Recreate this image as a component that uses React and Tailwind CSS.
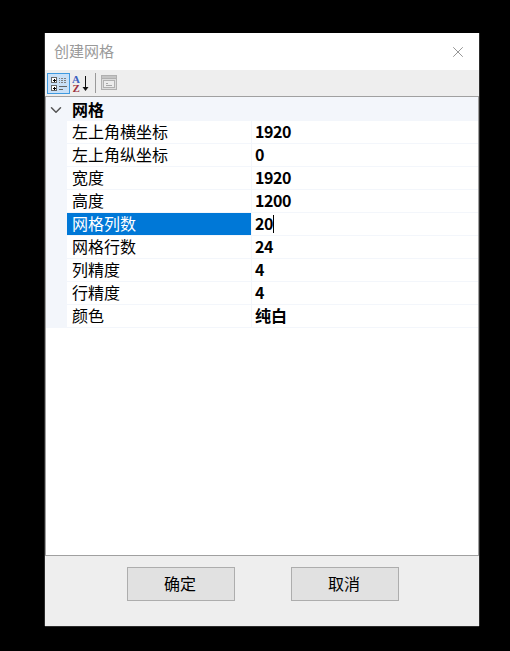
import React from "react";
import { X, ChevronDown } from "lucide-react";

const rows = [
  { label: "左上角横坐标", value: "1920" },
  { label: "左上角纵坐标", value: "0" },
  { label: "宽度", value: "1920" },
  { label: "高度", value: "1200" },
  { label: "网格列数", value: "20", selected: true },
  { label: "网格行数", value: "24" },
  { label: "列精度", value: "4" },
  { label: "行精度", value: "4" },
  { label: "颜色", value: "纯白", text: true },
];

function CategorizedIcon() {
  return (
    <svg width="18" height="17" viewBox="0 0 18 17" shapeRendering="crispEdges">
      <rect x="1.5" y="2.5" width="5" height="5" fill="#fff" stroke="#666" />
      <rect x="3" y="5" width="3" height="1" fill="#000" />
      <rect x="4" y="4" width="1" height="3" fill="#000" />
      <rect x="1.5" y="10.5" width="5" height="5" fill="#fff" stroke="#666" />
      <rect x="3" y="13" width="3" height="1" fill="#000" />
      <rect x="4" y="12" width="1" height="3" fill="#000" />
      <path d="M9 3h8M9 5h8M9 7h8" stroke="#808080" strokeDasharray="1 0.5" />
      <path d="M9 11h8M9 14h4" stroke="#666" />
    </svg>
  );
}

function SortIcon() {
  return (
    <svg width="18" height="19" viewBox="0 0 18 19">
      <text x="0" y="9" fontSize="11" fontWeight="700" fill="#3b5fc0" fontFamily="'Liberation Serif', serif">A</text>
      <text x="0.5" y="17.5" fontSize="11" fontWeight="700" fill="#9c3040" fontFamily="'Liberation Serif', serif">Z</text>
      <path d="M13.5 2v13" stroke="#111" strokeWidth="1" />
      <path d="M10.5 13h6l-3 4z" fill="#111" />
    </svg>
  );
}

function PagesIcon() {
  return (
    <svg width="16" height="16" viewBox="0 0 16 16" shapeRendering="crispEdges">
      <rect x="0.5" y="0.5" width="15" height="14" fill="#dcdcdc" stroke="#b0b0b0" />
      <rect x="0.5" y="0.5" width="15" height="3" fill="#c4c4c4" stroke="#b0b0b0" />
      <rect x="2.5" y="5.5" width="11" height="7" fill="#ececec" stroke="#b0b0b0" />
      <path d="M5 8h2M5 10h6" stroke="#a8a8a8" />
    </svg>
  );
}

function Row({ label, value, selected, text }) {
  return (
    <div className="flex h-[23px] border-b border-[#f3f6fb]">
      <div className="w-[21px] shrink-0 bg-[#f3f6fb]" />
      <div
        className={
          "w-[184px] shrink-0 pl-[5px] leading-[21px] whitespace-nowrap " +
          (selected ? "bg-[#0078d7] text-white" : "text-black")
        }
      >
        {label}
      </div>
      <div className="flex-1 border-l border-[#f3f6fb] pl-[3px] leading-[21px] font-bold text-black flex items-start">
        <span className={text ? "" : "tracking-[-0.4px]"}>{value}</span>
        {selected && <span className="w-px h-[18px] mt-[2px] bg-black" />}
      </div>
    </div>
  );
}

export default function App() {
  return (
    <div
      className="min-h-[651px] bg-black pt-[33px] pl-[45px] text-[16px]"
      style={{ fontFamily: "'Noto Sans CJK SC', 'Liberation Sans', sans-serif" }}
    >
      <div className="w-[434px] h-[593px] bg-[#eeeeee] flex flex-col shadow-[-1px_0_0_#2b2b2b,1px_0_0_#2b2b2b,0_1px_0_#2b2b2b]">
        {/* Title bar */}
        <div className="h-[37px] shrink-0 bg-white flex items-center justify-between pl-[9px] pr-[12px]">
          <span className="text-[#9a9a9a] text-[15px]">创建网格</span>
          <X className="w-[18px] h-[18px] text-[#8a8a8a]" strokeWidth={1.2} />
        </div>

        {/* Toolbar */}
        <div className="h-[26px] shrink-0 flex items-center pl-[2px]">
          <button className="w-[23px] h-[21px] flex items-center justify-center bg-[#c9e0f7] border border-[#3f9ae0]">
            <CategorizedIcon />
          </button>
          <div className="w-[22px] h-[21px] flex items-center justify-center">
            <SortIcon />
          </div>
          <div className="w-px h-[20px] bg-[#9a9a9a] ml-[3px]" />
          <div className="w-[22px] h-[21px] ml-[2px] flex items-center justify-center">
            <PagesIcon />
          </div>
        </div>

        {/* Property grid */}
        <div className="h-[460px] shrink-0 bg-white border border-[#a0a0a0]">
          <div className="h-[24px] bg-[#f3f6fb] flex items-center font-bold text-black">
            <div className="w-[21px] flex justify-center pr-[2px] pt-[1px]">
              <ChevronDown className="w-[18px] h-[18px] text-[#555]" strokeWidth={2} />
            </div>
            <span className="pl-[5px] leading-[24px]">网格</span>
          </div>
          {rows.map((row) => (
            <Row key={row.label} {...row} />
          ))}
        </div>

        {/* Buttons */}
        <div className="flex-1 flex justify-center gap-[56px] pt-[11px] pl-[2px]">
          <button className="w-[108px] h-[34px] pb-[2px] pr-[2px] bg-[#e1e1e1] border border-[#adadad] text-black">确定</button>
          <button className="w-[108px] h-[34px] pb-[2px] pr-[2px] bg-[#e1e1e1] border border-[#adadad] text-black">取消</button>
        </div>
      </div>
    </div>
  );
}
